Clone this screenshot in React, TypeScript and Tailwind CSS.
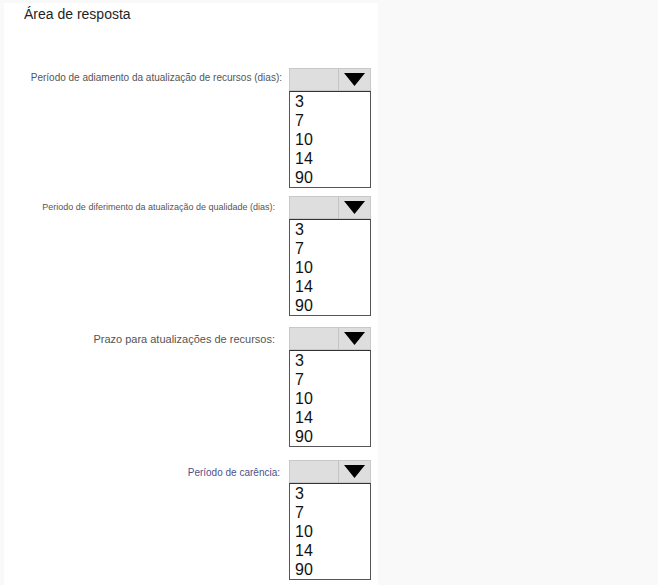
import React from "react";

const items = ["3", "7", "10", "14", "90"];

function Dropdown() {
  return (
    <div className="w-[82px] flex flex-col">
      <div className="flex h-[23px] bg-[#dedede] border border-[#c8c8c8]">
        <div className="w-[49px] border-r border-[#c4c4c4]" />
        <div className="flex-1 flex items-center justify-center">
          <svg width="21" height="13" viewBox="0 0 21 13">
            <polygon points="0,0 21,0 10.5,13" fill="#000" />
          </svg>
        </div>
      </div>
      <div className="h-[97px] bg-white border border-[#555] border-t-[#333] pl-[5px] pt-0 text-[16px] leading-[19px] text-[#111] font-['Liberation_Sans',Arial,sans-serif]">
        {items.map((i) => (
          <div key={i}>{i}</div>
        ))}
      </div>
    </div>
  );
}

function Row({
  label,
  labelClass,
  mt,
  pr,
}: {
  label: string;
  labelClass: string;
  mt: string;
  pr: string;
}) {
  return (
    <div className={`flex ${mt}`}>
      <div className={`w-[278px] h-[23px] flex items-center justify-end ${pr}`}>
        <span className={labelClass}>{label}</span>
      </div>
      <div className="ml-[7px]">
        <Dropdown />
      </div>
    </div>
  );
}

export default function App() {
  return (
    <div className="w-[671px] h-[585px] bg-white flex font-['Liberation_Sans',Arial,sans-serif]">
      <div className="w-[658px] h-[585px] bg-[#f9f9f9] pl-[4px] pt-[3px]">
        <div className="w-[374px] h-[582px] bg-white">
          <div className="pl-[20px] pt-[2px] text-[14px] leading-[18px] text-[#1f1f1f]">
            Área de resposta
          </div>
          <Row
            mt="mt-[45px]"
            pr="pr-0"
            label="Período de adiamento da atualização de recursos (dias):"
            labelClass="text-[10px] text-[#555] -mt-[5px]"
          />
          <Row
            mt="mt-[8px]"
            pr="pr-[7px]"
            label="Periodo de diferimento da atualização de qualidade (dias):"
            labelClass="text-[9px] text-[#555] mt-[0px]"
          />
          <Row
            mt="mt-[11px]"
            pr="pr-[7px]"
            label="Prazo para atualizações de recursos:"
            labelClass="text-[11px] text-[#555] mt-[1px]"
          />
          <Row
            mt="mt-[13px]"
            pr="pr-[2px]"
            label="Período de carência:"
            labelClass="text-[10px] text-[#4e5088] mt-[2px]"
          />
        </div>
      </div>
    </div>
  );
}
